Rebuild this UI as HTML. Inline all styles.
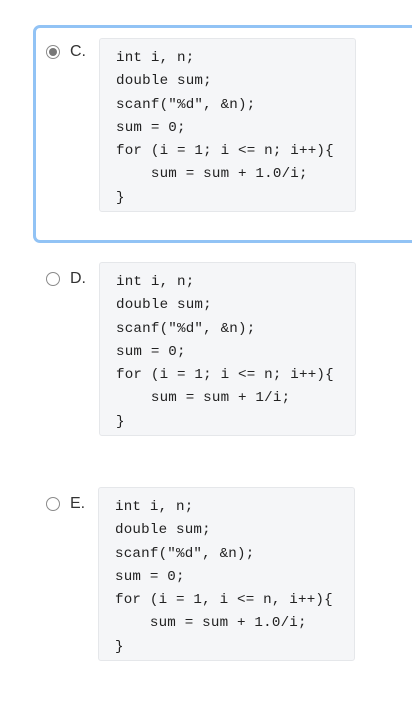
<!DOCTYPE html>
<html><head><style>
body{margin:0;width:412px;height:702px;background:#fff;position:relative;overflow:hidden;font-family:"Liberation Sans",sans-serif}
.sel{position:absolute;left:33px;top:25px;width:400px;height:212px;border:3px solid #92c3f5;border-radius:7px;background:#fff}
.radio{position:absolute;width:12px;height:12px;border:1px solid #8a8a8a;border-radius:50%;background:#fff}
.radio.on::after{content:"";position:absolute;left:2px;top:2px;width:8px;height:8px;border-radius:50%;background:#777}
.lab{position:absolute;font-size:16px;color:#333}
.code{position:absolute;width:257px;height:174px;background:#f5f6f8;border:1px solid #e5e7ea;border-radius:3px;box-sizing:border-box}
pre{margin:0;position:absolute;left:16px;top:8px;font-family:"Liberation Mono",monospace;font-size:14.2px;letter-spacing:0.2px;line-height:23.3px;color:#222}
</style></head><body>
<div class="sel"></div>
<div class="radio on" style="left:46px;top:45px"></div>
<div class="lab" style="left:70px;top:43px">C.</div>
<div class="code" style="left:99px;top:38px"><pre>int i, n;
double sum;
scanf("%d", &amp;n);
sum = 0;
for (i = 1; i &lt;= n; i++){
    sum = sum + 1.0/i;
}</pre></div>

<div class="radio" style="left:46px;top:272px"></div>
<div class="lab" style="left:70px;top:270px">D.</div>
<div class="code" style="left:99px;top:262px"><pre>int i, n;
double sum;
scanf("%d", &amp;n);
sum = 0;
for (i = 1; i &lt;= n; i++){
    sum = sum + 1/i;
}</pre></div>

<div class="radio" style="left:46px;top:497px"></div>
<div class="lab" style="left:70px;top:495px">E.</div>
<div class="code" style="left:98px;top:487px"><pre>int i, n;
double sum;
scanf("%d", &amp;n);
sum = 0;
for (i = 1, i &lt;= n, i++){
    sum = sum + 1.0/i;
}</pre></div>
</body></html>
